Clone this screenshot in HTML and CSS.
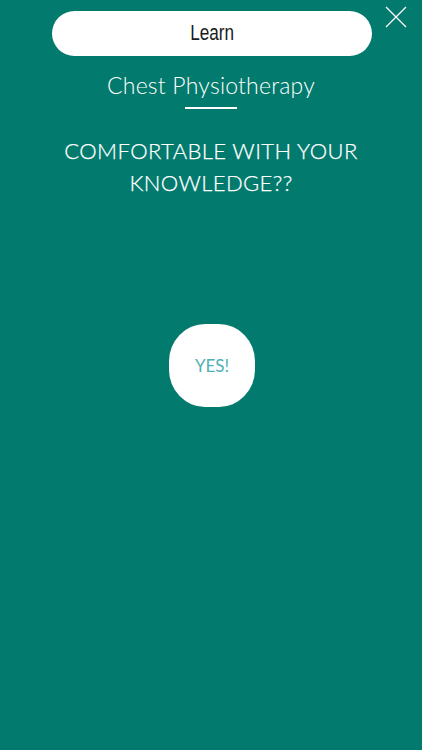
FILE: index.html
```html
<!DOCTYPE html>
<html>
<head>
<meta charset="utf-8">
<link rel="stylesheet" href="styles.css">
</head>
<body>
<div class="screen">
  <header class="header">
    <div class="pill"><span class="pill-label">Learn</span></div>
    <button class="close" aria-label="Close">
      <svg width="22" height="22" viewBox="0 0 22 22"><path d="M1 1L21 21M21 1L1 21" stroke="#ffffff" stroke-width="1.3" fill="none"/></svg>
    </button>
  </header>
  <h2 class="topic">Chest Physiotherapy</h2>
  <div class="rule"></div>
  <h1 class="question">COMFORTABLE WITH YOUR<br>KNOWLEDGE??</h1>
  <div class="answer">
    <div class="yes">YES!</div>
  </div>
</div>
</body>
</html>
```
FILE: styles.css
```css
html, body {
  margin: 0;
  padding: 0;
  background: #027a6e;
}
.screen {
  width: 422px;
  height: 750px;
  background: #027a6e;
  color: #ffffff;
  font-family: Lato, "Open Sans", sans-serif;
  display: flex;
  flex-direction: column;
  align-items: center;
  position: relative;
}
.header {
  padding-top: 11px;
  display: flex;
  justify-content: center;
  width: 100%;
}
.pill {
  width: 320px;
  height: 45px;
  border-radius: 23px;
  background: #ffffff;
  color: #1a1a1a;
  display: flex;
  align-items: center;
  justify-content: center;
  margin-left: 2px;
}
.pill-label {
  display: inline-block;
  font-family: "Liberation Sans Narrow", "Liberation Sans", sans-serif;
  font-size: 22px;
  transform: scaleX(0.78);
  margin-top: -1px;
}
.close {
  position: absolute;
  top: 6px;
  right: 15px;
  background: none;
  border: 0;
  padding: 0;
  width: 22px;
  height: 22px;
}
.topic {
  margin: 14px 0 0;
  font-weight: 300;
  font-size: 23px;
  line-height: 30px;
  letter-spacing: 0.2px;
}
.rule {
  width: 52px;
  height: 2px;
  background: #ffffff;
  margin-top: 7px;
}
.question {
  margin: 26px 0 0;
  font-weight: 300;
  font-size: 22px;
  line-height: 32px;
  text-align: center;
  letter-spacing: 0.4px;
  -webkit-text-stroke: 0.25px #ffffff;
}
.answer {
  margin-top: 125px;
  display: flex;
  justify-content: center;
}
.yes {
  width: 86px;
  height: 83px;
  background: #ffffff;
  border-radius: 42% / 45%;
  color: #4fb0b4;
  font-size: 17px;
  font-weight: 400;
  display: flex;
  align-items: center;
  justify-content: center;
  margin-left: 2px;
}
```
